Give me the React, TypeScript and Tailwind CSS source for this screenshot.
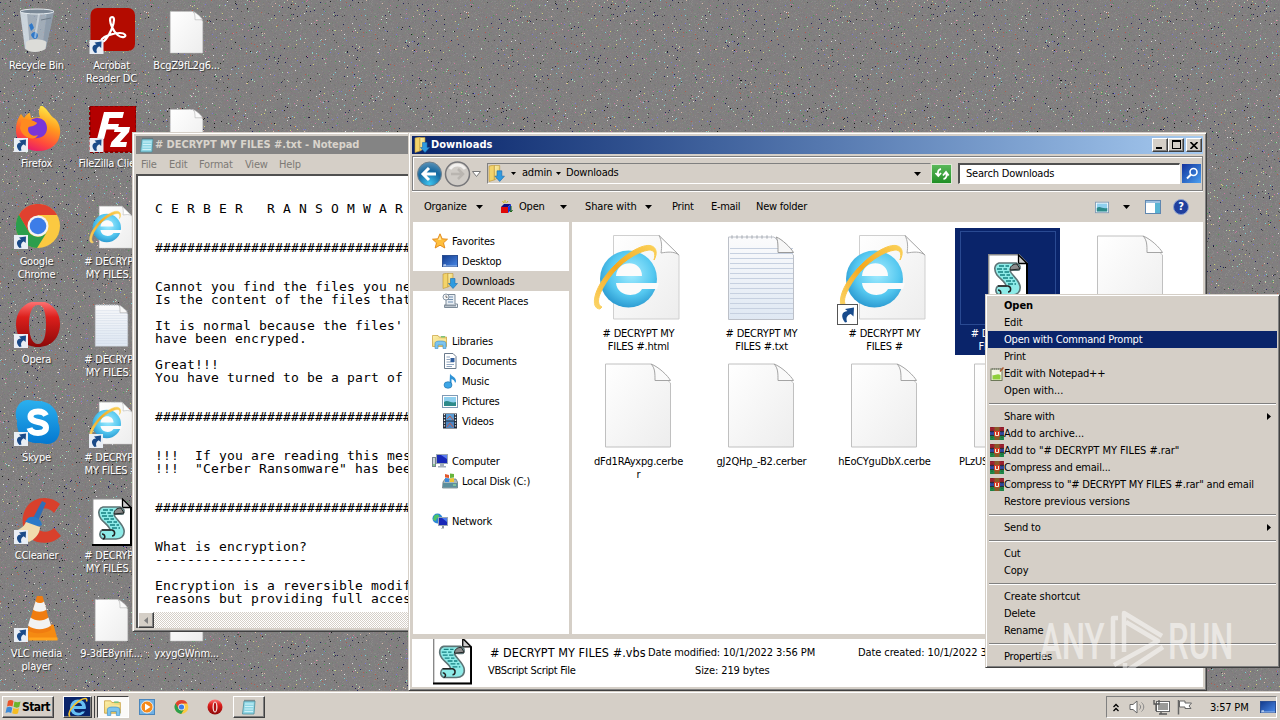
import React from "react";

/* ---------- desktop wallpaper speckle ---------- */

const TILE = 320;
const SPECKS: [string, number][] = [
  ["#7a7a7a", 12000],
  ["#8a8888", 12000],
  ["#847880", 6000],
  ["#7c867c", 5000],
  ["#86807a", 6000],
  ["#4c4c4c", 420],
  ["#24245c", 380],
  ["#1c1c1c", 180],
  ["#dcdcdc", 170],
  ["#d8b8a8", 280],
  ["#a8d8b0", 280],
  ["#78ccd4", 180],
  ["#c878a0", 280],
  ["#7878d8", 280],
  ["#b45c4c", 230],
  ["#4c9c58", 270],
  ["#d0d078", 170],
];

function makeSpecks() {
  let s = 987654321;
  const rnd = () => {
    s ^= s << 13;
    s ^= s >>> 17;
    s ^= s << 5;
    return (s >>> 0) / 4294967296;
  };
  return SPECKS.map(([color, n]) => {
    let d = "";
    for (let i = 0; i < n; i++) {
      d += `M${Math.floor(rnd() * TILE)} ${Math.floor(rnd() * TILE)}h1v1h-1z`;
    }
    return { color, d };
  });
}
const specks = makeSpecks();

function Wallpaper() {
  return (
    <svg className="absolute inset-0" width="1280" height="720" shapeRendering="crispEdges">
      <defs>
        <pattern id="speck" width={TILE} height={TILE} patternUnits="userSpaceOnUse">
          <rect width={TILE} height={TILE} fill="#817f80" />
          {specks.map((p) => (
            <path key={p.color} d={p.d} fill={p.color} />
          ))}
        </pattern>
      </defs>
      <rect width="1280" height="720" fill="url(#speck)" />
    </svg>
  );
}

/* ---------- icons ---------- */

function Defs() {
  return (
    <svg width="0" height="0" className="absolute">
      <defs>
        <linearGradient id="page" x1="0" y1="0" x2="1" y2="1">
          <stop offset="0" stopColor="#fff" />
          <stop offset="1" stopColor="#ededed" />
        </linearGradient>
        <linearGradient id="notepage" x1="0" y1="0" x2="0" y2="1">
          <stop offset="0" stopColor="#fbfbfc" />
          <stop offset="1" stopColor="#dfe8f3" />
        </linearGradient>
        <radialGradient id="ie" cx="0.55" cy="0.4" r="0.65">
          <stop offset="0" stopColor="#a5ecff" />
          <stop offset="0.6" stopColor="#55c8f0" />
          <stop offset="1" stopColor="#2593cc" />
        </radialGradient>
        <linearGradient id="ring" x1="0" y1="1" x2="1" y2="0">
          <stop offset="0" stopColor="#fbd66a" />
          <stop offset="0.5" stopColor="#f5a81c" />
          <stop offset="1" stopColor="#fbd25a" />
        </linearGradient>
        <linearGradient id="opera" x1="0" y1="0" x2="0" y2="1">
          <stop offset="0" stopColor="#f77" />
          <stop offset="0.35" stopColor="#dc1f1c" />
          <stop offset="1" stopColor="#8c0808" />
        </linearGradient>
        <linearGradient id="fox" x1="0.7" y1="0" x2="0.3" y2="1">
          <stop offset="0" stopColor="#fff04a" />
          <stop offset="0.4" stopColor="#ff9a1e" />
          <stop offset="0.75" stopColor="#ff4a3c" />
          <stop offset="1" stopColor="#e5186e" />
        </linearGradient>
        <linearGradient id="skype" x1="0" y1="0" x2="0" y2="1">
          <stop offset="0" stopColor="#2bb0ee" />
          <stop offset="1" stopColor="#0478d0" />
        </linearGradient>
        <linearGradient id="folder" x1="0" y1="0" x2="1" y2="1">
          <stop offset="0" stopColor="#fdf3b0" />
          <stop offset="1" stopColor="#e6c253" />
        </linearGradient>
        <radialGradient id="back" cx="0.5" cy="0.9" r="0.9">
          <stop offset="0" stopColor="#3cc3ee" />
          <stop offset="0.6" stopColor="#17689f" />
          <stop offset="1" stopColor="#5b93b8" />
        </radialGradient>
        <linearGradient id="screen" x1="0" y1="0" x2="1" y2="1">
          <stop offset="0" stopColor="#123a8c" />
          <stop offset="1" stopColor="#4a8ae8" />
        </linearGradient>
      </defs>
    </svg>
  );
}

function Shortcut() {
  return (
    <g transform="translate(0.5 73.5)">
      <rect width="20" height="20" fill="#fff" stroke="#555" />
      <path d="M7.500 18C3 12 4 7 10 6.500L7.500 4.500L16.500 3L16 12L13.300 9.500C9 11 8.500 13.500 9.500 17.500Z" fill="#174b8c" />
    </g>
  );
}

function DesktopShortcut() {
  return (
    <g>
      <rect x="1" y="34" width="14" height="14" fill="#e9eef5" />
      <path d="M6.500 47C2.500 43 3.500 38.500 8 38.500L6 36.500L13 35.500L12.700 42L10.700 40.200C8 41.500 7.500 44 8.500 46.500Z" fill="#1a4a88" />
    </g>
  );
}

function IePage({ size, link }: { size: string; link?: boolean }) {
  return (
    <svg viewBox="0 0 96 96" className={size}>
      <path d="M22.500 4.500H68L88 24V88H22.500Z" fill="url(#page)" stroke="#cfcfcf" />
      <path d="M68 4.500C71 10 71 16 70 22C76 21 83 20 88 24Z" fill="#fff" stroke="#aaa" />
      <circle cx="37.500" cy="48" r="28.500" fill="url(#ie)" />
      <path d="M25 45C26 28 51 28 51 45Z" fill="#fbfbfb" />
      <path d="M25 52H68L66 58H51C45 68 26 65 25 52Z" fill="#fbfbfb" />
      <path
        d="M9 78C0 78 2 62 13 47C27 27 49 13 59 14.500C67 16 66 24 63 29C65 22 63 19 58 19C46 20.500 29 32 19 46C8 61 4 73 11 76Z"
        fill="url(#ring)"
        stroke="url(#ring)"
      />
      {link && (size === "size-12" ? (
        <g transform="translate(0 0) scale(2)"><DesktopShortcut /></g>
      ) : (
        <Shortcut />
      ))}
    </svg>
  );
}

function BlankPage({ size }: { size: string }) {
  return (
    <svg viewBox="0 0 96 96" className={size}>
      <path d="M14.500 5H60L79.500 24V88H14.500Z" fill="url(#page)" stroke="#c0c0c0" />
      <path d="M60 5C64 9 64 14 64 21.500H79.500C77 17 68 8 60 5Z" fill="#fafafa" stroke="#a4a4a4" />
    </svg>
  );
}

function NotePage({ size }: { size: string }) {
  const lines = [14, 19, 24, 29, 34, 39, 44, 49, 54, 59, 64, 69, 74, 79];
  return (
    <svg viewBox="0 0 96 96" className={size}>
      <path d="M14.500 6H60L79.500 24V88.500H14.500Z" fill="url(#notepage)" stroke="#bcc0c8" />
      {lines.map((y) => (
        <path key={y} d={`M16 ${y + 3.5}H79`} stroke="#c6d0e0" />
      ))}
      <path d="M17 6H58" stroke="#c0c4ca" strokeWidth="3" strokeDasharray="2 3" />
      <path d="M62 6C64 9 64 14 64 21.500H79.500C77 17 68 8 62 6Z" fill="#f7f7f7" stroke="#999" />
    </svg>
  );
}

function ScriptPage({ className }: { className: string }) {
  return (
    <svg viewBox="0 0 40 48" className={className}>
      <path d="M0.700 0.700H31L39 9V47H0.700Z" fill="#fff" stroke="#888" strokeWidth="1.400" />
      <path d="M0 47H39V9" fill="none" stroke="#000" strokeWidth="2" />
      <path d="M30.500 1V9.500H39Z" fill="#ccc" stroke="#000" strokeWidth="1.300" />
      <path
        d="M11 9H28C32 10 33 13 31 16C27 17 23 15 22 17C24 21 31 26 32 32C33 38 29 41 24 41H11C7 39 7 34 10 32H18C18 28 12 25 9 21C5 15 7 10 11 9Z"
        fill="#8eebe8"
        stroke="#5d7476"
        strokeWidth="1.600"
      />
      <path d="M22 16C22 12 25 10 29 10L32 15Z" fill="#8c8c8c" stroke="#222" />
      <path d="M11 12H21M9 15H19M10 18H21M12 21H22M15 24H25M18 27H27M20 30H28" stroke="#168080" strokeWidth="1.300" strokeDasharray="5 1.500" />
      <path d="M10 32H20C24 33 23 38 20 38M11 41C14 40 13 36 10 36" fill="none" stroke="#222" strokeWidth="1.500" />
    </svg>
  );
}

function RecycleBin() {
  return (
    <svg viewBox="0 0 48 48" className="size-12">
      <g transform="translate(-2 0)">
        <path d="M9 3L14 41C20 45 32 44 35 40L43 3Z" fill="#a9b8c6" fillOpacity="0.8" />
        <path d="M9 3L14 41L19 42L16 4Z" fill="#e8eff4" fillOpacity="0.6" />
        <path d="M36 4L31 42L35 40L43 3Z" fill="#8a99a8" fillOpacity="0.8" />
        <ellipse cx="26" cy="3.500" rx="17" ry="2.500" fill="#7a8896" stroke="#e6ecf0" />
        <path d="M15 34C20 30 32 31 35.500 34L34.500 41C29 45 18 45 15 41Z" fill="#dcdcd8" />
        <path d="M18 17L21 15L23 20L20 23ZM20 27C22 22 27 24 27 28C26 32 22 32 20 27Z" fill="#2f78c8" />
        <path d="M30 12L40 10" stroke="#6f7c88" />
        <path d="M28 6L24 30" stroke="#e9f0f4" strokeOpacity="0.5" strokeWidth="2" />
      </g>
    </svg>
  );
}

function Acrobat() {
  return (
    <svg viewBox="0 0 48 48" className="size-12">
      <rect x="2.500" y="0" width="44.500" height="43" rx="7" fill="#b30b00" />
      <path
        d="M24 9C21 9 22 15 24 19C27 26 32 30 36 29C39 28 37 25 32 25C25 25 17 28 14 31C12 34 15 35 18 31C22 26 26 17 26 12C26 10 25 9 24 9Z"
        fill="none"
        stroke="#fff"
        strokeWidth="2.200"
      />
      <g transform="translate(0.5 -2)"><DesktopShortcut /></g>
    </svg>
  );
}

function Firefox() {
  return (
    <svg viewBox="0 0 48 48" className="size-12">
      <path d="M28 -1C36 4 37 10 41 12C45 15 48 21 47 28C46 38 37 45 26 45C13 45 3 37 3 24C3 17 5 12 8 8L11 12C13 9 15 7 17 7L18 12C22 11 24 12 27 11C25 7 26 2 28 -1Z" fill="url(#fox)" />
      <path d="M18 14C26 9 34 14 34 22C34 30 27 33 21 32C14 30 12 24 15 20C18 21 22 20 24 17Z" fill="#7a35d8" />
      <path d="M9 13C13 13 20 14 24 17C20 21 15 19 15 23C15 29 21 31 25 29C22 36 9 32 7 22Z" fill="#ff8a1f" />
      <g transform="translate(0 -2)"><DesktopShortcut /></g>
    </svg>
  );
}

function FileZilla() {
  return (
    <svg viewBox="0 0 48 48" className="size-12">
      <rect x="2" y="0" width="46" height="46" fill="#b30000" stroke="#8a0000" strokeWidth="2" strokeDasharray="3 2" />
      <path d="M16 6H36L34.500 12H21.500L20 18H31L29.500 23.500H18.500L16 33H9Z" fill="#fff" />
      <path d="M27 21H42L41 26L32 36H39L38 41H22L23.500 36L33 26H26Z" fill="#fff" />
      <g transform="translate(0.5 -2)"><DesktopShortcut /></g>
    </svg>
  );
}

function ChromeMark() {
  return (
    <g>
      <circle cx="24" cy="22" r="22" fill="#fbc941" />
      <path d="M4.900 11A22 22 0 0 1 43.100 11H24A11 11 0 0 0 14 17Z" fill="#e0412f" />
      <path d="M4.900 11A22 22 0 0 0 23 44L33 28A11 11 0 0 1 14.500 27.500Z" fill="#2b9e4c" />
      <path d="M4.900 11L14.500 27.500L24 11Z" fill="#e0412f" />
      <path d="M4.900 11A22 22 0 0 0 3 28L14.500 27.500Z" fill="#2b9e4c" />
      <circle cx="24" cy="22" r="10.500" fill="#f4f4f4" />
      <circle cx="24" cy="22" r="8.300" fill="#3d7de8" />
    </g>
  );
}

function Chrome() {
  return (
    <svg viewBox="0 0 48 48" className="size-12">
      <g transform="translate(1 0)"><ChromeMark /></g>
      <g transform="translate(0 -3)"><DesktopShortcut /></g>
    </svg>
  );
}

function Opera() {
  return (
    <svg viewBox="0 0 48 48" className="size-12">
      <path
        fillRule="evenodd"
        d="M25 -1C38 -1 47 9 47 22C47 36 38 45 25 45C12 45 3 36 3 22C3 9 12 -1 25 -1ZM25 3C19 3 16 11 16 22C16 34 19 42 25 42C31 42 33 34 33 22C33 11 31 3 25 3Z"
        fill="url(#opera)"
      />
      <g transform="translate(0 -2)"><DesktopShortcut /></g>
    </svg>
  );
}

function Skype() {
  return (
    <svg viewBox="0 0 48 48" className="size-12">
      <path d="M15 0C19 0 21 1 23 1C36 0 46 9 45 22C49 31 46 44 34 44C31 44 29 43 27 43C12 44 3 34 4 21C0 10 6 0 15 0Z" fill="url(#skype)" />
      <path
        d="M33 15.500C31.500 12.500 29 11.500 25 11.500C20 11.500 17.500 13.500 17.500 16.500C17.500 24 33 20 33 27.500C33 31.500 29 33 25 33C20.500 33 17.500 31.500 16.500 28"
        fill="none"
        stroke="#fff"
        strokeWidth="6"
      />
      <g transform="translate(0 -2)"><DesktopShortcut /></g>
    </svg>
  );
}

function CCleaner() {
  return (
    <svg viewBox="0 0 48 48" className="size-12">
      <path d="M47 6C38 -3 20 -2 13 10C7 20 9 34 18 41C27 47 40 46 48 38L41 30C36 35 28 35 24 30C20 25 20 17 25 13C30 9 37 10 41 15Z" fill="#d8402c" />
      <path d="M29 3L33 5L24 25L19 22Z" fill="#2f6fb8" />
      <path d="M15 20C20 17 28 20 29 27L22 30L12 24Z" fill="#2a7ac8" />
      <path d="M13 24L27 29C27 36 22 41 16 44L1 33C6 32 11 29 13 24Z" fill="#f1dcae" />
      <g transform="translate(0 -2)"><DesktopShortcut /></g>
    </svg>
  );
}

function Vlc() {
  return (
    <svg viewBox="0 0 48 48" className="size-12">
      <g transform="translate(0.5 -0.5)">
        <path d="M30 29H40L44 44H15L14 36Z" fill="#f58a12" />
        <path d="M24 -1C27 -2 29 0 29.500 2L38 34C32 39 18 39 14 34L23 2Z" fill="#f07c10" />
        <path d="M22 6C25 8 28 8 30.500 6L33 14C29 17 23 17 19.500 14Z" fill="#f2f2f2" />
        <path d="M17 22C22 26 30 26 35 22L37.500 30C31 35 21 35 14.500 30Z" fill="#f2f2f2" />
        <path d="M15 42H44V45H15Z" fill="#ffa51f" />
      </g>
      <g transform="translate(0 -2)"><DesktopShortcut /></g>
    </svg>
  );
}

function IeSmall() {
  return (
    <svg viewBox="0 0 24 24" className="size-6">
      <circle cx="12" cy="12.500" r="8" fill="#66c0f4" />
      <path d="M8 11C8 6.500 16 6.500 16 11Z" fill="#0a246a" />
      <path d="M8 14H21V16.500H16C14 19 8.500 18 8 14Z" fill="#0a246a" />
      <path d="M4 21.500C1 18 6 11 13 6C18 2.500 22 2.500 20.500 6.500" fill="none" stroke="#f5c530" strokeWidth="1.600" />
    </svg>
  );
}

function FolderStack({ className = "size-4" }: { className?: string }) {
  return (
    <svg viewBox="0 0 16 16" className={className}>
      <path d="M0.500 2.500H6L7 4H14.500V13.500H0.500Z" fill="url(#folder)" stroke="#c79d3a" strokeWidth="0.700" />
      <path d="M1 6H14V8H1Z" fill="#f8e69a" />
      <path d="M9 3H13V4.500H9Z" fill="#7cc37a" />
      <path d="M3 15.500V10.500C3 8.500 5 8 8.500 8S14 8.500 14 10.500V15.500H11V12H6V15.500Z" fill="#7cc4ee" stroke="#3f8fc8" strokeWidth="0.600" />
    </svg>
  );
}

function DownloadsIcon({ className = "size-4" }: { className?: string }) {
  return (
    <svg viewBox="0 0 16 16" className={className}>
      <path d="M1 1L6 0V14L1 15.500Z" fill="#f3d36a" stroke="#bd9636" strokeWidth="0.600" />
      <path d="M6 0.500H11V11L6 14Z" fill="url(#folder)" stroke="#bd9636" strokeWidth="0.600" />
      <path d="M8.500 5.500H13V10.500H15.500L11 15.500L6.500 10.500H8.500Z" fill="#2f9be0" stroke="#1b6cb0" strokeWidth="0.600" />
    </svg>
  );
}

function StarIcon() {
  return (
    <svg viewBox="0 0 16 16" className="size-4">
      <path d="M8 0.800L10.200 5.800L15.500 6.200L11.500 9.800L12.800 15L8 12.200L3.200 15L4.500 9.800L0.500 6.200L5.800 5.800Z" fill="#ffbf3c" stroke="#e08416" strokeWidth="0.900" />
      <path d="M8 3L9.300 6.800L6 7Z" fill="#ffeaa8" />
    </svg>
  );
}

function DesktopIcon() {
  return (
    <svg viewBox="0 0 16 16" className="size-4">
      <rect x="0.500" y="2.500" width="15" height="11" fill="url(#screen)" stroke="#2b4f92" />
      <path d="M1 13H15" stroke="#9fc0ee" />
      <path d="M1.500 12H4" stroke="#fff" />
    </svg>
  );
}

function RecentIcon() {
  return (
    <svg viewBox="0 0 16 16" className="size-4">
      <path d="M4 1.500H13V11H15.500V14.500H2.500V12H4Z" fill="#e8eef4" stroke="#7c8a98" />
      <path d="M6 4H11M6 6.500H11M6 9H11" stroke="#6e8db0" />
      <circle cx="4" cy="4" r="3" fill="#f8f8f8" stroke="#8896a4" />
      <path d="M4 2.500V4.300H5.500" fill="none" stroke="#333" strokeWidth="0.700" />
      <path d="M2.500 12.500H14" stroke="#8a96a2" strokeWidth="2" />
    </svg>
  );
}

function DocIcon() {
  return (
    <svg viewBox="0 0 16 16" className="size-4">
      <path d="M2.500 0.500H11L14 3.500V15.500H2.500Z" fill="#fff" stroke="#6a7a8c" />
      <path d="M4.500 4H8M4.500 6.500H8M4.500 9H12M4.500 11.500H12M4.500 13.500H10" stroke="#8fa5bf" />
      <rect x="8.500" y="5" width="4" height="4" fill="#2e5c9c" />
    </svg>
  );
}

function MusicIcon() {
  return (
    <svg viewBox="0 0 16 16" className="size-4">
      <path d="M8 0.500C9 3 14 4 14 8C14 9 13.500 9.500 13 10C13 7.500 11 6.500 9.500 6V12H7.500Z" fill="#2f93d6" />
      <ellipse cx="6" cy="12" rx="4" ry="3.300" fill="#3ea6e6" stroke="#1d6ba6" strokeWidth="0.600" />
    </svg>
  );
}

function PictureIcon({ className = "size-4" }: { className?: string }) {
  return (
    <svg viewBox="0 0 16 16" className={className}>
      <rect x="0.500" y="2.500" width="15" height="12" fill="#fff" stroke="#7f9ab5" />
      <rect x="2" y="4" width="12" height="9" fill="#8fd0ef" />
      <path d="M2 9C6 6 9 11 14 9V13H2Z" fill="#2d8a8a" />
    </svg>
  );
}

function VideoIcon() {
  return (
    <svg viewBox="0 0 16 16" className="size-4">
      <rect x="1" y="0.500" width="14" height="15" fill="#222b3a" />
      <rect x="4" y="1" width="8" height="6.500" fill="#5a9bd4" />
      <rect x="4" y="8.500" width="8" height="6.500" fill="#4a86c4" />
      <path d="M5 6L8 3L11 7M5 14L8 10L11 14" fill="none" stroke="#c05a4a" />
      <path d="M2.500 1V15M13.500 1V15" stroke="#eee" strokeWidth="1.300" strokeDasharray="1.300 1.500" />
    </svg>
  );
}

function ComputerIcon() {
  return (
    <svg viewBox="0 0 16 16" className="size-4">
      <rect x="0.500" y="4.500" width="3" height="9" fill="#cdd5dc" stroke="#76828e" />
      <path d="M1 12H3" stroke="#45b045" />
      <rect x="4.500" y="1.500" width="11" height="9" fill="#1828b8" stroke="#9aa7b4" />
      <path d="M9 2H15V6Z" fill="#5c7cf0" />
      <path d="M8 11H12V13H14V14.500H6V13H8Z" fill="#a4afba" />
    </svg>
  );
}

function DiskIcon() {
  return (
    <svg viewBox="0 0 16 16" className="size-4">
      <path d="M1 9L3 6H14L15.500 9V15H0.500Z" fill="#a9b8bd" stroke="#5d7078" strokeWidth="0.700" />
      <rect x="1" y="10" width="14.500" height="4.500" fill="#5c8e9c" />
      <path d="M3 1L7 2V5L3 4.500Z" fill="#e2582c" />
      <path d="M8 0.500L12 1V4.500L8 5Z" fill="#67b53c" />
      <path d="M3 5L7 5.500V9H3Z" fill="#3a89dc" />
      <path d="M8 5.500L12 5V9H8Z" fill="#f4c430" />
      <path d="M11 12H14" stroke="#a5f3a0" />
    </svg>
  );
}

function NetworkIcon() {
  return (
    <svg viewBox="0 0 16 16" className="size-4">
      <circle cx="5.500" cy="5.500" r="5" fill="#2c86d6" />
      <path d="M2 3C4 1 7 1 7 3S4 5 4 8L1 7Z" fill="#4cc46a" />
      <rect x="6.500" y="4.500" width="9" height="8" fill="#1828b8" stroke="#9aa7b4" />
      <path d="M10 5H15V9Z" fill="#4c7cf0" />
      <path d="M10 13H12V15.500H9V15H10Z" fill="#8a96a2" />
    </svg>
  );
}

function NotepadIcon({ className = "size-4" }: { className?: string }) {
  return (
    <svg viewBox="0 0 16 16" className={className}>
      <path d="M3 2H14L13 15H1.500Z" fill="#8fd6e4" stroke="#4d8e9c" strokeWidth="0.800" />
      <path d="M4 5H12.500M3.800 7.500H12.300M3.600 10H12M3.400 12.500H12" stroke="#cdf2f8" />
      <path d="M3.500 1.500H14" stroke="#5b6468" strokeWidth="1.500" strokeDasharray="1 1" />
    </svg>
  );
}

function RarIcon() {
  return (
    <svg viewBox="0 0 14 13" className="h-[13px] w-3.5">
      <rect width="14" height="4.400" fill="#a02030" />
      <rect y="4.400" width="14" height="4.200" fill="#3048a0" />
      <rect y="8.600" width="14" height="4.400" fill="#1e8a4a" />
      <path d="M0 4.400H14M0 8.600H14" stroke="#181818" strokeWidth="0.800" />
      <rect x="4.500" width="5" height="13" fill="#8a5a28" />
      <rect x="4" y="4" width="6" height="5.500" fill="#d43a24" />
      <path d="M5.500 5V8.500M8.500 5V8.500M5.500 8.500H8.500" stroke="#f5f0d8" fill="none" />
      <path d="M2 0V13M12 0V13" stroke="#222" strokeOpacity="0.500" strokeDasharray="1 1.500" />
    </svg>
  );
}

function NppIcon() {
  return (
    <svg viewBox="0 0 14 14" className="size-3.5">
      <rect x="1" y="2" width="11" height="11.500" fill="#f4f6e4" stroke="#5f6d4a" strokeWidth="0.900" />
      <path d="M2.500 12.500V8C5 9 7 6 10.500 8V12.500Z" fill="#8fcf3a" />
      <path d="M2 2H11" stroke="#666" strokeDasharray="1 1" />
      <path d="M13.500 0.500L10 4.500" stroke="#b05a30" strokeWidth="1.500" />
    </svg>
  );
}

function OpenBoxIcon() {
  return (
    <svg viewBox="0 0 14 14" className="size-3.5">
      <path d="M1 7H8V13H1Z" fill="#e00808" />
      <path d="M1 7L4 4H11L8 7Z" fill="#101080" />
      <path d="M8 7L11 4V10L8 13Z" fill="#1030e0" />
      <path d="M11 6V12M9.500 10L11 12L12.500 10" stroke="#106010" fill="none" />
      <path d="M5 0V3M2.500 1L4 3M8 1L6.500 3" stroke="#c8b820" />
    </svg>
  );
}

function WinFlag() {
  return (
    <svg viewBox="0 0 16 16" className="size-4">
      <path d="M3 2C5 0.500 7 1 8.500 2L7.500 7.500C5.500 6.500 4 6.500 2 7.500Z" fill="#e8552b" />
      <path d="M9.500 2.500C11.500 3.500 13.500 3.500 15.500 2.500L14.300 7.800C12.500 9 10.500 8.800 8.500 7.800Z" fill="#6cb42c" />
      <path d="M1.700 8.500C3.700 7.500 5.500 7.700 7.300 8.700L6.200 14C4.500 13 2.500 13 0.500 14Z" fill="#3c8ad8" />
      <path d="M8.300 9C10 10 12 10.200 14 9L13 14.200C11 15.500 9 15.300 7.200 14.300Z" fill="#f5bd22" />
    </svg>
  );
}

/* ---------- small shared pieces ---------- */

function Caret({ className = "" }: { className?: string }) {
  return (
    <svg viewBox="0 0 7 4" className={`h-1 w-[7px] shrink-0 ${className}`}>
      <path d="M0 0H7L3.500 4Z" fill="#000" />
    </svg>
  );
}

const raised = "border border-t-white border-l-white border-r-[#404040] border-b-[#404040] shadow-[inset_-1px_-1px_0_#808080]";

/* ---------- desktop ---------- */

type Item = { icon: React.ReactNode; label: string[] };

const deskPage = (
  <div className="pt-px pl-px">
    <BlankPage size="size-12" />
  </div>
);

const columns: Item[][] = [
  [
    { icon: <RecycleBin />, label: ["Recycle Bin"] },
    { icon: <Firefox />, label: ["Firefox"] },
    { icon: <Chrome />, label: ["Google", "Chrome"] },
    { icon: <Opera />, label: ["Opera"] },
    { icon: <Skype />, label: ["Skype"] },
    { icon: <CCleaner />, label: ["CCleaner"] },
    { icon: <Vlc />, label: ["VLC media", "player"] },
  ],
  [
    { icon: <Acrobat />, label: ["Acrobat", "Reader DC"] },
    { icon: <FileZilla />, label: ["FileZilla Client"] },
    { icon: <IePage size="size-12" />, label: ["# DECRYPT", "MY FILES..."] },
    { icon: <NotePage size="size-12" />, label: ["# DECRYPT", "MY FILES..."] },
    { icon: <IePage size="size-12" link />, label: ["# DECRYPT", "MY FILES #"] },
    { icon: <ScriptPage className="h-12 w-10" />, label: ["# DECRYPT", "MY FILES..."] },
    { icon: deskPage, label: ["9-3dE8ynif...."] },
  ],
  [
    { icon: deskPage, label: ["BcgZ9fL2g6..."] },
    { icon: deskPage, label: [] },
    { icon: null, label: [] },
    { icon: null, label: [] },
    { icon: null, label: [] },
    { icon: null, label: [] },
    { icon: deskPage, label: ["yxygGWnm..."] },
  ],
];

function Desktop() {
  return (
    <div className="absolute top-2 left-[-1px] flex">
      {columns.map((col, c) => (
        <div key={c} className="flex w-[75px] flex-col">
          {col.map((it, i) => (
            <div key={i} className="flex h-[98px] flex-col items-center">
              <div className="flex h-[51px] items-start justify-center">{it.icon}</div>
              {it.label.map((l, k) => (
                <div key={k} className="h-[13px] whitespace-nowrap text-[11px] leading-[13px] text-white [text-shadow:1px_1px_1px_#333]">
                  {l}
                </div>
              ))}
            </div>
          ))}
        </div>
      ))}
    </div>
  );
}

/* ---------- notepad ---------- */

const hashes = "#".repeat(32);
const note = `C E R B E R   R A N S O M W A R


${hashes}


Cannot you find the files you ne
Is the content of the files that

It is normal because the files'
have been encryped.

Great!!!
You have turned to be a part of


${hashes}


!!!  If you are reading this mes
!!!  "Cerber Ransomware" has bee


${hashes}


What is encryption?
-------------------

Encryption is a reversible modif
reasons but providing full acces`;

function Notepad() {
  return (
    <div className="absolute top-[132px] left-[132px] flex h-[500px] w-[300px] flex-col border border-[#d5cfc7] border-r-[#404040] border-b-[#404040] bg-[#d5cfc7] p-[3px] shadow-[inset_1px_1px_0_#fff,inset_-1px_-1px_0_#808080]">
      <div className="flex h-[18px] shrink-0 items-center bg-[#848484] pl-[3px] text-[11px] font-bold tracking-[-0.060px] text-[#d9d4cc]">
        <NotepadIcon />
        <span className="pt-px whitespace-nowrap"># DECRYPT MY FILES #.txt - Notepad</span>
      </div>
      <div className="flex h-5 shrink-0 items-center pt-0.5 text-[11px] text-[#7d7a76]">
        <span className="w-[33px] pl-[5px]">File</span>
        <span className="w-[30px]">Edit</span>
        <span className="w-[46px]">Format</span>
        <span className="w-[34px]">View</span>
        <span>Help</span>
      </div>
      <div className="flex min-h-0 flex-1 flex-col border-t-2 border-l-2 border-[#505050] bg-white">
        <pre className="min-h-0 flex-1 overflow-hidden pt-[26px] pl-[17px] font-['DejaVu_Sans_Mono',monospace] text-[13px] leading-[13px] tracking-[0.174px] text-black">
          {note}
        </pre>
        <div className="flex h-4 shrink-0 bg-[repeating-conic-gradient(#fff_0_25%,#d5cfc7_0_50%)] bg-size-[2px_2px]">
          <div className={`flex size-4 items-center justify-center bg-[#d5cfc7] ${raised}`}>
            <svg viewBox="0 0 4 7" className="h-[7px] w-1">
              <path d="M4 0V7L0 3.500Z" fill="#808080" />
            </svg>
          </div>
        </div>
      </div>
    </div>
  );
}

/* ---------- explorer ---------- */

const nav: ({ icon: React.ReactNode; text: string; child?: boolean; active?: boolean } | null)[] = [
  { icon: <StarIcon />, text: "Favorites" },
  { icon: <DesktopIcon />, text: "Desktop", child: true },
  { icon: <DownloadsIcon />, text: "Downloads", child: true, active: true },
  { icon: <RecentIcon />, text: "Recent Places", child: true },
  null,
  { icon: <FolderStack />, text: "Libraries" },
  { icon: <DocIcon />, text: "Documents", child: true },
  { icon: <MusicIcon />, text: "Music", child: true },
  { icon: <PictureIcon />, text: "Pictures", child: true },
  { icon: <VideoIcon />, text: "Videos", child: true },
  null,
  { icon: <ComputerIcon />, text: "Computer" },
  { icon: <DiskIcon />, text: "Local Disk (C:)", child: true },
  null,
  { icon: <NetworkIcon />, text: "Network" },
];

const files: (Item & { selected?: boolean })[] = [
  { icon: <IePage size="size-24" />, label: ["# DECRYPT MY", "FILES #.html"] },
  { icon: <NotePage size="size-24" />, label: ["# DECRYPT MY", "FILES #.txt"] },
  { icon: <IePage size="size-24" link />, label: ["# DECRYPT MY", "FILES #"] },
  { icon: <ScriptPage className="h-12 w-10" />, label: ["# D", "FI"], selected: true },
  { icon: <BlankPage size="size-24" />, label: [] },
  { icon: <BlankPage size="size-24" />, label: ["dFd1RAyxpg.cerbe", "r"] },
  { icon: <BlankPage size="size-24" />, label: ["gJ2QHp_-B2.cerber"] },
  { icon: <BlankPage size="size-24" />, label: ["hEoCYguDbX.cerbe"] },
  { icon: <BlankPage size="size-24" />, label: ["PLzUS"] },
];

function Explorer() {
  return (
    <div className="absolute top-[132px] left-[408px] flex h-[559px] w-[799px] flex-col border border-[#d5cfc7] border-r-[#404040] border-b-[#404040] bg-[#d5cfc7] p-[3px] text-[11px] text-black shadow-[inset_1px_1px_0_#fff,inset_-1px_-1px_0_#808080]">
      {/* title bar */}
      <div className="flex h-[18px] shrink-0 items-center bg-linear-to-r from-[#0a246a] to-[#a6caf0] pr-[1px] pl-0.5 font-bold text-white">
        <DownloadsIcon />
        <span className="ml-[1px] flex-1 pt-px tracking-[0.050px]">Downloads</span>
        <div className={`flex h-3.5 w-4 items-end justify-start bg-[#d5cfc7] pb-0.5 pl-[3px] ${raised}`}>
          <div className="h-0.5 w-1.5 bg-black" />
        </div>
        <div className={`mr-0.5 flex h-3.5 w-4 items-start justify-center bg-[#d5cfc7] pt-[1px] ${raised}`}>
          <div className="h-[9px] w-[9px] border border-t-2 border-black" />
        </div>
        <div className={`flex h-3.5 w-4 items-center justify-center bg-[#d5cfc7] ${raised}`}>
          <svg viewBox="0 0 8 7" className="h-[7px] w-2">
            <path d="M0.500 0L7.500 7M7.500 0L0.500 7" stroke="#000" strokeWidth="1.600" />
          </svg>
        </div>
      </div>

      {/* address row */}
      <div className="mt-0.5 flex h-[35px] shrink-0 items-center border border-[#808080] border-b-[#808080] pl-1 shadow-[inset_1px_1px_0_#fff,0_1px_0_#fff]">
        <svg viewBox="0 0 54 26" className="h-[26px] w-[54px] shrink-0">
          <circle cx="12.500" cy="13" r="12" fill="url(#back)" stroke="#6d7f8c" />
          <path d="M6 13H19M12 7L6 13L12 19" fill="none" stroke="#fff" strokeWidth="3" />
          <circle cx="40.500" cy="13" r="12" fill="#cfcbc6" stroke="#77777a" strokeWidth="1.500" />
          <path d="M33 8A9 9 0 0 1 48 8" fill="none" stroke="#f2f0ee" strokeWidth="3" />
          <path d="M34 13H46M41 8L46 13L41 18" fill="none" stroke="#b9b5b0" strokeWidth="2.500" />
        </svg>
        <svg viewBox="0 0 9 6" className="mr-1.5 ml-[1px] h-1.5 w-[9px] shrink-0">
          <path d="M0.500 0.500H8.500L4.500 5.500Z" fill="#fff" stroke="#777" />
        </svg>
        <div className="flex h-[21px] w-[444px] items-center border border-[#808080] border-r-[#d5cfc7] border-b-white">
          <DownloadsIcon className="mr-[6px] size-[17px]" />
          <svg viewBox="0 0 5 3" className="h-[3px] w-[5px]">
            <path d="M0 0H5L2.500 3Z" fill="#000" />
          </svg>
          <span className="w-[40px] pl-1.5">admin</span>
          <svg viewBox="0 0 5 3" className="h-[3px] w-[5px]">
            <path d="M0 0H5L2.500 3Z" fill="#000" />
          </svg>
          <span className="flex-1 pl-[5px]">Downloads</span>
          <Caret className="mr-[9px]" />
        </div>
        <div className="mr-1.5 flex h-5 w-[21px] items-center justify-center border border-[#dde8d4] bg-linear-to-b from-[#59b85a] to-[#1e8f24]">
          <svg viewBox="0 0 16 14" className="h-3.5 w-4">
            <path d="M7 2C4 2.500 3.500 5 4.200 8M1.500 6L4.300 9L7 6M9.500 12C13 11.500 13 8 12 6M9 8.500L12 5L14.700 8.500" fill="none" stroke="#fff" strokeWidth="1.800" />
          </svg>
        </div>
        <div className="flex h-[21px] w-[222px] items-center border border-t-2 border-l-2 border-[#505050] border-r-white border-b-white bg-white pl-1.5">Search Downloads</div>
        <div className="ml-0.5 flex size-[19px] items-center justify-center bg-linear-to-br from-[#16309c] to-[#4ea0f0]">
          <svg viewBox="0 0 14 14" className="size-3.5">
            <circle cx="8.500" cy="5" r="3.500" fill="none" stroke="#fff" strokeWidth="1.600" />
            <path d="M6 7.500L2 11.500" stroke="#fff" strokeWidth="2" />
          </svg>
        </div>
      </div>

      {/* command bar */}
      <div className="flex h-[31px] shrink-0 items-center pl-3">
        <span className="w-[52px] pt-px">Organize</span>
        <Caret />
        <span className="w-[17px]" />
        <span className="w-[19px]"><OpenBoxIcon /></span>
        <span className="w-[41px] pt-px">Open</span>
        <Caret />
        <span className="w-[78px] pt-px pl-[18px] tracking-[-0.100px]">Share with</span>
        <Caret />
        <span className="w-[59px] pt-px pl-5">Print</span>
        <span className="w-[45px] pt-px tracking-[-0.300px]">E-mail</span>
        <span className="flex-1 pt-px tracking-[-0.250px]">New folder</span>
        <PictureIcon className="mr-[14px] size-[14px]" />
        <Caret className="mr-[15px]" />
        <svg viewBox="0 0 16 14" className="mr-3 h-3.5 w-4">
          <rect x="0.500" y="0.500" width="15" height="13" fill="#fff" stroke="#5f87b0" />
          <path d="M1 2H15" stroke="#9cc0e0" strokeWidth="2" />
          <rect x="10" y="3" width="5" height="10" fill="#58b4d4" />
        </svg>
        <div className="mr-3.5 flex size-4 items-center justify-center rounded-full border border-[#8ba0d0] bg-[#203f9e] text-[11px] leading-none font-bold text-white">?</div>
      </div>

      {/* panes */}
      <div className="flex min-h-0 flex-1 bg-white">
        <div className="w-[157px] shrink-0 border-l border-[#d5cfc7] pt-[9px]">
          {nav.map((n, i) =>
            n ? (
              <div key={i} className={`flex h-5 items-center gap-1 ${n.child ? "pl-[29px]" : "pl-[19px]"} ${n.active ? "bg-[#d5cfc7]" : ""}`}>
                {n.icon}
                <span className="pt-0.5">{n.text}</span>
              </div>
            ) : (
              <div key={i} className="h-5" />
            ),
          )}
        </div>
        <div className="w-[3px] shrink-0 bg-[#d5cfc7]" />
        <div className="grid min-w-0 flex-1 auto-rows-[128px] grid-cols-[repeat(5,123px)] overflow-hidden pt-1.5 pl-[14px]">
          {files.map((f, i) => (
            <div key={i} className={`flex h-[127px] w-[105px] flex-col items-center ${f.selected ? "bg-[#0a246a] text-white" : ""}`}>
              <div className={`mt-[3px] flex w-24 shrink-0 items-center justify-center ${f.selected ? "mb-0.5 h-[94px] border border-[#2a4a92]" : "h-24"}`}>{f.icon}</div>
              {f.label.map((l, k) => (
                <span
                  key={k}
                  className={`h-[13px] leading-[13px] whitespace-nowrap ${f.selected ? (k ? "-ml-[50px]" : "-ml-[55px]") : ""} ${l === "PLzUS" ? "-ml-[68px]" : ""}`}
                >
                  {l}
                </span>
              ))}
            </div>
          ))}
        </div>
      </div>

      {/* details pane */}
      <div className="flex h-[53px] shrink-0 border-t-[5px] border-[#d5cfc7] bg-white pl-[21px]">
        <div className="h-[46px] w-[39px] overflow-hidden">
          <ScriptPage className="-mt-0.5 h-12 w-[39px]" />
        </div>
        <div className="ml-4 flex flex-col gap-1 pt-[7px] whitespace-nowrap">
          <div className="flex h-3.5 items-center">
            <span className="w-[160px] pl-0.5 text-[12.500px] tracking-[0.050px]"># DECRYPT MY FILES #.vbs</span>
            <span className="w-[210px] tracking-[-0.100px]">Date modified: 10/1/2022 3:56 PM</span>
            <span className="tracking-[-0.100px]">Date created: 10/1/2022 3</span>
          </div>
          <div className="flex h-3.5 items-center">
            <span className="w-[207px] tracking-[-0.300px]">VBScript Script File</span>
            <span className="tracking-[-0.100px]">Size: 219 bytes</span>
          </div>
        </div>
      </div>
    </div>
  );
}

/* ---------- context menu ---------- */

type Entry = { text: string; bold?: boolean; active?: boolean; icon?: React.ReactNode; sub?: boolean; wide?: boolean } | null;

const menu: Entry[] = [
  { text: "Open", bold: true, wide: true },
  { text: "Edit" },
  { text: "Open with Command Prompt", active: true },
  { text: "Print" },
  { text: "Edit with Notepad++", icon: <NppIcon /> },
  { text: "Open with...", wide: true },
  null,
  { text: "Share with", sub: true },
  { text: "Add to archive...", icon: <RarIcon />, wide: true },
  { text: 'Add to "# DECRYPT MY FILES #.rar"', icon: <RarIcon />, wide: true },
  { text: "Compress and email...", icon: <RarIcon /> },
  { text: 'Compress to "# DECRYPT MY FILES #.rar" and email', icon: <RarIcon /> },
  { text: "Restore previous versions", wide: true },
  null,
  { text: "Send to", sub: true },
  null,
  { text: "Cut" },
  { text: "Copy" },
  null,
  { text: "Create shortcut", wide: true },
  { text: "Delete" },
  { text: "Rename" },
  null,
  { text: "Properties" },
];

function ContextMenu() {
  return (
    <div className="absolute top-[294px] left-[985px] w-[295px] border border-[#d5cfc7] border-r-[#404040] border-b-[#404040] bg-[#d5cfc7] p-0.5 text-[11px] text-black shadow-[inset_1px_1px_0_#fff,inset_-1px_-1px_0_#808080]">
      {menu.map((m, i) =>
        m ? (
          <div key={i} className={`flex h-[17px] items-center pr-1.5 pl-[1px] whitespace-nowrap ${m.active ? "bg-[#0a246a] text-white" : ""}`}>
            <span className="flex w-[15px] shrink-0 pl-px">{m.icon}</span>
            <span className={`flex-1 pt-px ${m.bold ? "font-bold" : ""} ${m.wide ? "tracking-[-0.060px]" : ""}`}>{m.text}</span>
            {m.sub && (
              <svg viewBox="0 0 4 7" className="h-[7px] w-1">
                <path d="M0 0L4 3.500L0 7Z" fill="#000" />
              </svg>
            )}
          </div>
        ) : (
          <div key={i} className="flex h-[9px] items-center px-[1px]">
            <div className="h-0.5 w-full border-t border-b border-t-[#808080] border-b-white" />
          </div>
        ),
      )}
    </div>
  );
}

/* ---------- watermark ---------- */

function Watermark() {
  return (
    <div className="pointer-events-none absolute top-[609px] left-[1040px] flex h-[66px] w-[194px] items-center text-white opacity-50">
      <div className="w-[68px]">
        <div className="w-max origin-left scale-x-[0.66] font-[Roboto,sans-serif] text-[50px] leading-[66px] font-medium">ANY</div>
      </div>
      <svg viewBox="0 0 58 66" className="h-[66px] w-[58px] shrink-0">
        <path d="M5 50V9H10M16 43V4L54 27M18 13L50 32L6 56M17 54V63L55 38" fill="none" stroke="#fff" strokeWidth="4.500" strokeLinejoin="round" />
      </svg>
      <div className="ml-0.5 w-[64px]">
        <div className="w-max origin-left scale-x-[0.66] font-[Roboto,sans-serif] text-[50px] leading-[66px] font-medium">RUN</div>
      </div>
    </div>
  );
}

/* ---------- taskbar ---------- */

function Taskbar() {
  return (
    <div className="absolute bottom-0 left-0 flex h-7 w-full items-center border-t border-white bg-[#d5cfc7] pt-[1px] pr-[3px] pl-0.5 text-[11px] text-black shadow-[0_-1px_0_#d5cfc7]">
      <div className={`flex h-[22px] w-[52px] items-center gap-[1px] pl-0.5 ${raised}`}>
        <WinFlag />
        <span className="text-[12px] font-bold tracking-[-0.600px]">Start</span>
      </div>
      <div className={`ml-[9px] flex h-[22px] w-[29px] items-center justify-center bg-[#0a246a] ${raised}`}>
        <IeSmall />
      </div>
      <div className="h-[22px] w-[3px] border-r border-[#404040]" />
      <div className="ml-0.5 flex h-[22px] w-8 items-center justify-center border border-t-[#404040] border-r-white border-b-white border-l-[#404040] bg-[#fbfaf8]">
        <FolderStack className="size-[18px]" />
      </div>
      <div className="flex w-[35px] items-center justify-center">
        <svg viewBox="0 0 16 16" className="size-4">
          <rect x="0.500" y="0.500" width="15" height="15" fill="#6fb0e4" stroke="#4a86bc" />
          <circle cx="8" cy="8" r="6" fill="#f58a1c" stroke="#fff" strokeWidth="0.800" />
          <path d="M6 4.500L11.500 8L6 11.500Z" fill="#fff" />
        </svg>
      </div>
      <div className="flex w-[34px] items-center justify-center">
        <svg viewBox="0 0 48 44" className="h-[14px] w-[15px]"><ChromeMark /></svg>
      </div>
      <div className="flex w-[33px] items-center justify-center">
        <svg viewBox="0 0 16 16" className="size-4">
          <circle cx="8" cy="8" r="7.500" fill="url(#opera)" />
          <ellipse cx="8" cy="8" rx="2.500" ry="5.500" fill="#f4e6e4" />
          <ellipse cx="8" cy="8" rx="1.200" ry="4.500" fill="#b01010" />
        </svg>
      </div>
      <div className={`ml-[2px] flex h-[22px] w-8 items-center justify-center ${raised}`}>
        <NotepadIcon />
      </div>
      <div className="flex-1" />
      <div className="flex h-[22px] w-[171px] items-center border border-[#808080] border-r-white border-b-white pl-1.5">
        <svg viewBox="0 0 6 9" className="h-[9px] w-1.5">
          <path d="M0.500 4L3 1.500L5.500 4M0.500 8L3 5.500L5.500 8" fill="none" stroke="#000" strokeWidth="1.300" />
        </svg>
        <svg viewBox="0 0 17 16" className="ml-2.5 h-4 w-[17px]">
          <path d="M1 5.500H4L8 2V14L4 10.500H1Z" fill="#fff" stroke="#666" />
          <path d="M10.500 5.500C12 7 12 9 10.500 10.500M12.500 3.500C15.500 6 15.500 10 12.500 12.500" fill="none" stroke="#888" />
        </svg>
        <svg viewBox="0 0 17 16" className="ml-[7px] h-4 w-[17px]">
          <rect x="4.500" y="3.500" width="11" height="8" fill="#9a9a98" stroke="#fff" />
          <rect x="3.500" y="2.500" width="13" height="10" fill="none" stroke="#666" />
          <path d="M8 13V15M6 15H14M1 1V5H6V1M3 5V12" fill="none" stroke="#555" strokeWidth="1.300" />
        </svg>
        <svg viewBox="0 0 16 16" className="ml-[7px] size-4">
          <path d="M1.500 1V15.500" stroke="#666" strokeWidth="1.500" />
          <path d="M2.500 2H8V4H14.500L12 7L14 9.500H8V8H2.500Z" fill="#fff" stroke="#666" />
        </svg>
        <span className="ml-[17px] flex-1 pt-0.5 whitespace-nowrap">3:57 PM</span>
        <DesktopIcon />
      </div>
    </div>
  );
}

export default function App() {
  return (
    <div className="relative h-[720px] w-[1280px] overflow-hidden bg-[#808080] font-['DejaVu_Sans_Condensed','DejaVu_Sans',sans-serif] tracking-[-0.200px]">
      <Defs />
      <Wallpaper />
      <Desktop />
      <Notepad />
      <Explorer />
      <Taskbar />
      <ContextMenu />
      <Watermark />
    </div>
  );
}
